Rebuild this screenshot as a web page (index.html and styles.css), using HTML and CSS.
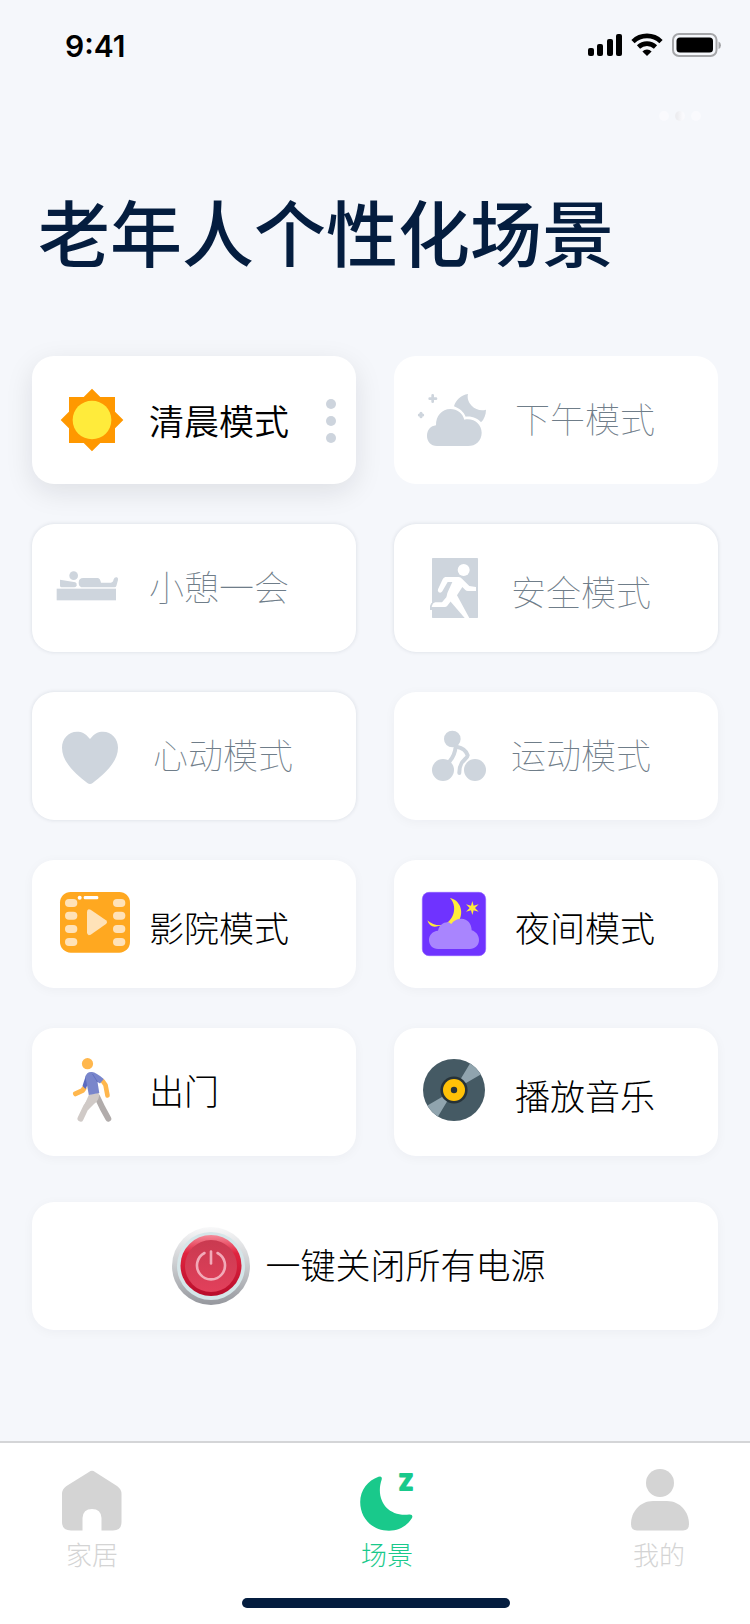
FILE: index.html
```html
<!DOCTYPE html>
<html lang="zh-CN">
<head>
<meta charset="utf-8">
<meta name="viewport" content="width=device-width, initial-scale=1">
<title>老年人个性化场景</title>
<link rel="stylesheet" href="styles.css">
</head>
<body>
<div class="screen">
  <header class="status">
    <time class="clock">9:41</time>
    <svg class="status-icons" width="136" height="26" viewBox="0 0 136 26" aria-hidden="true">
      <rect x="1" y="15" width="6" height="8" rx="2"/>
      <rect x="10" y="11" width="6" height="12" rx="2"/>
      <rect x="20" y="6" width="6" height="17" rx="2"/>
      <rect x="29" y="1" width="6" height="22" rx="2"/>
      <g fill="none" stroke="#000" stroke-width="4.6">
        <path d="M46 8.600a20 20 0 0 1 28 0"/>
        <path d="M51.500 14a12.300 12.300 0 0 1 17 0"/>
      </g>
      <path d="M60 23l-4.600-4.600a6.600 6.600 0 0 1 9.200 0z"/>
      <rect x="86" y="1" width="43.500" height="22" rx="6" fill="none" stroke="#a5a6a9" stroke-width="2"/>
      <rect x="89.500" y="4.500" width="36.500" height="15" rx="3.500"/>
      <path d="M131.500 8.500q2.500 1 2.500 3.700t-2.500 3.700z" fill="#a5a6a9"/>
    </svg>
  </header>

  <button class="page-more" type="button" aria-label="更多">
    <span class="dot"></span><span class="dot dot-mid"></span><span class="dot"></span>
  </button>

  <h1 class="title">老年人个性化场景</h1>

  <main class="scenes">
    <div class="card raised">
      <button class="scene" type="button">
        <svg class="icon" viewBox="102 120 240 240" aria-hidden="true">
          <path fill="#ff9800" d="M147 171H285V309H147zM216 146L310 240L216 334L122 240z"/>
          <circle cx="216" cy="240" r="58" fill="#ffeb3b"/>
        </svg>
        <span class="label strong">清晨模式</span>
      </button>
      <button class="card-more" type="button" aria-label="清晨模式选项">
        <span class="dot"></span><span class="dot"></span><span class="dot"></span>
      </button>
    </div>

    <div class="card flat">
      <button class="scene off wide" type="button">
        <svg class="icon" viewBox="108 120 240 240" aria-hidden="true">
          <path d="M171 318C152 318 141 304 141 288C141 270 152 258 168 256C167 228 186 207 211 207C232 207 248 220 253 239C282 233 305 253 305 278C305 302 287 318 264 318z"/>
          <path d="M264 162C243 165 227 181 222 199C240 206 251 216 257 230C278 228 294 236 303 247C312 238 318 224 318 209C302 214 286 208 275 197C265 187 261 173 264 162z"/>
          <path d="M158 166V185M149 176H168" fill="none" stroke="#ced5dd" stroke-width="8" stroke-linecap="round"/>
          <path d="M123 220V230M118 225H128" fill="none" stroke="#ced5dd" stroke-width="9" stroke-linecap="round"/>
        </svg>
        <span class="label">下午模式</span>
      </button>
    </div>

    <div class="card edged">
      <button class="scene off" type="button">
        <svg class="icon" viewBox="102 114 240 240" aria-hidden="true">
          <rect x="110" y="236" width="178" height="35"/>
          <path d="M120 209L166 217Q171 219 170 226Q169 232 163 232H124Q120 231 120 227z"/>
          <circle cx="161" cy="197" r="13"/>
          <path d="M190 204H234Q240 205 243 218H273Q279 218 281 208Q284 200 291 202Q295 204 294 210L289 228Q288 232 283 232H190Q176 232 176 218Q176 204 190 204z"/>
        </svg>
        <span class="label">小憩一会</span>
      </button>
    </div>

    <div class="card edged">
      <button class="scene off low" type="button">
        <svg class="icon" viewBox="108 114 240 240" aria-hidden="true">
          <rect x="156" y="144" width="138" height="180" rx="2"/>
          <path d="M150 300V288Q152 278 160 276V300z"/>
          <g fill="#fff">
            <circle cx="251" cy="180" r="18"/>
            <path d="M196 201H236Q242 202 246 206L268 228L288 231V243H264Q259 243 256 240L247 231L231 256L268 324H254L205 267Q198 257 203 247L217 216H203L187 244Q183 250 176 247Q172 243 174 238L188 208Q191 202 196 201z"/>
            <path d="M201 254L213 273L202 287Q199 291 194 291H155Q158 278 166 277H186L199 262z"/>
          </g>
        </svg>
        <span class="label">安全模式</span>
      </button>
    </div>

    <div class="card edged">
      <button class="scene off wide" type="button">
        <svg class="icon" viewBox="102 108 240 240" aria-hidden="true">
          <path d="M210 177C197 160 185 155 171 155C145 155 126 176 126 203C126 246 168 283 202 309Q210 315 218 309C252 283 294 246 294 203C294 176 275 155 249 155C235 155 223 160 210 177z"/>
        </svg>
        <span class="label">心动模式</span>
      </button>
    </div>

    <div class="card">
      <button class="scene off" type="button">
        <svg class="icon" viewBox="108 108 240 240" aria-hidden="true">
          <circle cx="217" cy="177" r="25"/>
          <circle cx="189" cy="270" r="33"/>
          <circle cx="285" cy="270" r="33"/>
          <g fill="none" stroke="#ced5dd" stroke-width="12" stroke-linecap="round">
            <path d="M227 200Q225 225 209 244"/>
            <path d="M230 200C250 204 260 215 263 226C262 238 237 240 238 279"/>
          </g>
        </svg>
        <span class="label">运动模式</span>
      </button>
    </div>

    <div class="card">
      <button class="scene low" type="button">
        <svg class="icon" viewBox="102 102 240 240" aria-hidden="true">
          <rect x="120" y="126" width="210" height="182" rx="32" fill="#ffa820"/>
          <g fill="#ffe2b8">
            <rect x="135" y="147" width="37" height="24" rx="12"/>
            <rect x="135" y="185" width="37" height="24" rx="12"/>
            <rect x="135" y="225" width="37" height="24" rx="12"/>
            <rect x="135" y="264" width="37" height="24" rx="12"/>
            <rect x="279" y="147" width="37" height="24" rx="12"/>
            <rect x="279" y="185" width="37" height="24" rx="12"/>
            <rect x="279" y="225" width="37" height="24" rx="12"/>
            <rect x="279" y="264" width="37" height="24" rx="12"/>
            <path d="M201 186Q201 174 212 179L258 211Q264 217 258 222L212 254Q201 259 201 247z"/>
          </g>
          <circle cx="179" cy="143" r="6" fill="#fff"/>
          <rect x="191" y="138" width="44" height="10" rx="4" fill="#fff"/>
        </svg>
        <span class="label">影院模式</span>
      </button>
    </div>

    <div class="card">
      <button class="scene wide low" type="button">
        <svg class="icon" viewBox="108 102 240 240" aria-hidden="true">
          <rect x="127" y="127" width="190" height="190" rx="20" fill="#6f33ff" stroke="#8d5cff" stroke-width="2"/>
          <path fill="#ffeb3b" d="M210 144C240 150 252 185 238 210L215 228H175Q150 236 142 211Q158 226 180 226C215 224 238 175 210 144z"/>
          <path fill="#ffeb3b" d="M277 153L281 167L296 163L285 174L296 185L281 181L277 195L273 181L258 185L269 174L258 163L273 167z"/>
          <path fill="#a985fe" d="M174 297C158 297 147 285 147 270C147 255 158 243 174 242C178 224 192 215 206 217L214 222C220 212 232 206 245 206C262 206 275 221 275 241C288 245 297 256 297 270C297 286 284 297 270 297z"/>
        </svg>
        <span class="label">夜间模式</span>
      </button>
    </div>

    <div class="card">
      <button class="scene" type="button">
        <svg class="icon" viewBox="0 0 80 80" aria-hidden="true">
          <g fill="none" stroke-linecap="round" stroke-linejoin="round">
            <path d="M30 36.500L28.500 38.500L21.500 41.800" stroke="#ffb74d" stroke-width="5"/>
            <path d="M49 29.500L51.500 33L53.500 43.500" stroke="#ffb74d" stroke-width="4.600"/>
            <path d="M43 44.500L48.500 56L54.300 66.600" stroke="#b1acab" stroke-width="6"/>
            <path d="M39 45L32 55L26.500 66.600" stroke="#d0cac7" stroke-width="6"/>
          </g>
          <path d="M35 42.500L45 41.300Q46 48 40 52L34 58L30 54z" fill="#d0cac7"/>
          <circle cx="33.500" cy="11.700" r="5.600" fill="#ffb74d"/>
          <path d="M32 23L28.500 34L31.500 37L34 32z" fill="#5c6bc0"/>
          <path d="M31.500 25Q32.500 19.500 38 20Q42 20.300 49.800 27L46 31.500L43.500 30L45.300 41L34.800 43z" fill="#7986cb"/>
          <path d="M38.500 22L43.500 30" fill="none" stroke="#5c6bc0" stroke-width=".8"/>
        </svg>
        <span class="label">出门</span>
      </button>
    </div>

    <div class="card">
      <button class="scene wide low" type="button">
        <svg class="icon" viewBox="0 0 80 80" aria-hidden="true">
          <circle cx="38" cy="38" r="31" fill="#455a64"/>
          <path d="M38 38L54 11.500A31 31 0 0 1 64.700 22.500zM38 38L22 64.500A31 31 0 0 1 11.400 53.500z" fill="#90a4ae"/>
          <circle cx="38" cy="38" r="13.600" fill="#263238"/>
          <circle cx="38" cy="38" r="11" fill="#ffc107"/>
          <circle cx="38" cy="38" r="3.200" fill="#263238"/>
        </svg>
        <span class="label">播放音乐</span>
      </button>
    </div>

    <div class="card power">
      <button class="power-button" type="button">
        <svg class="power-icon" viewBox="0 0 78 78" aria-hidden="true">
          <defs>
            <linearGradient id="rim" x1="0" y1="0" x2="0" y2="1">
              <stop offset="0" stop-color="#f8f8f9"/>
              <stop offset=".5" stop-color="#c9cbce"/>
              <stop offset="1" stop-color="#95979d"/>
            </linearGradient>
            <linearGradient id="bevel" x1="0" y1="0" x2="0" y2="1">
              <stop offset="0" stop-color="#f58a99"/>
              <stop offset=".3" stop-color="#e0243f"/>
              <stop offset="1" stop-color="#b80d2b"/>
            </linearGradient>
            <linearGradient id="face" x1="0" y1="0" x2="0" y2="1">
              <stop offset="0" stop-color="#c93a50"/>
              <stop offset="1" stop-color="#e2405b"/>
            </linearGradient>
          </defs>
          <circle cx="39" cy="39" r="39" fill="url(#rim)"/>
          <circle cx="39" cy="39" r="34" fill="#d5e6e9"/>
          <circle cx="39" cy="38.500" r="30.500" fill="url(#bevel)"/>
          <circle cx="39" cy="39" r="26" fill="url(#face)"/>
          <g fill="none" stroke="#f2aab8" stroke-width="2.600" stroke-linecap="round">
            <path d="M39 24.500V36.500"/>
            <path d="M32.500 26A14 14 0 1 0 45.500 26"/>
          </g>
        </svg>
        <span class="label">一键关闭所有电源</span>
      </button>
    </div>
  </main>

  <nav class="tabs" aria-label="主导航">
    <a class="tab" href="#home">
      <svg class="tab-icon" viewBox="0 0 62 64" aria-hidden="true">
        <path d="M28 4Q31 1.500 34 4L56 18Q60.500 21 60.500 26V54Q60.500 62.500 52 62.500H40.500V50Q40 41 31 41T21.500 50V62.500H10Q1 62.500 1 54V26Q1 21 5.500 18z"/>
      </svg>
      <span>家居</span>
    </a>
    <a class="tab current" href="#scenes" aria-current="page">
      <svg class="tab-icon" viewBox="0 0 62 64" aria-hidden="true">
        <path d="M22.500 8.700Q26.500 7.500 25.700 11.500C19 31 31 49 53 46.500Q57.500 46 56 50C51 58 43 62.700 33 62.700C16 62.700 4.200 50 4.200 34C4.200 22 12 12.500 22.500 8.700z"/>
        <text class="snooze" x="43" y="22">Z</text>
      </svg>
      <span>场景</span>
    </a>
    <a class="tab" href="#me">
      <svg class="tab-icon" viewBox="0 0 62 64" aria-hidden="true">
        <circle cx="32" cy="15" r="14"/>
        <path d="M25 33H39C52 33 61 44 61 56Q61 62.500 55 62.500H9Q3 62.500 3 56C3 44 12 33 25 33z"/>
      </svg>
      <span>我的</span>
    </a>
    <div class="home-bar"></div>
  </nav>
</div>
</body>
</html>
```

FILE: styles.css
```css
* {
  box-sizing: border-box;
}

body {
  margin: 0;
  background: #f5f7fb;
  color: #000;
  font-family: "Inter", "Noto Sans CJK SC", sans-serif;
}

button {
  margin: 0;
  padding: 0;
  border: 0;
  background: none;
  color: inherit;
  font: inherit;
  text-align: left;
  cursor: pointer;
}

.screen {
  display: flex;
  flex-direction: column;
  min-height: 100vh;
}

.status {
  display: flex;
  justify-content: space-between;
  align-items: center;
  padding: 24px 27px 0 65px;
}

.clock {
  font-size: 30px;
  font-weight: 600;
  line-height: 44px;
}

.page-more {
  display: flex;
  gap: 6px;
  align-self: flex-end;
  margin: 43px 49px 0 0;
}

.page-more .dot {
  background: #fafafd;
}

.page-more .dot-mid {
  background: linear-gradient(90deg, #ededf0 20%, #fafafd 80%);
}

.dot {
  display: block;
  width: 10px;
  height: 10px;
  border-radius: 50%;
  background: #cdd4dd;
}

.title {
  margin: 55px 32px 0 38px;
  color: #041d3f;
  font-family: "Noto Sans CJK SC", sans-serif;
  font-size: 72px;
  font-weight: 500;
  line-height: 108px;
}

.scenes {
  display: grid;
  grid-template-columns: 1fr 1fr;
  gap: 40px 38px;
  padding: 72px 32px 0;
}

.card {
  display: flex;
  min-height: 128px;
  border-radius: 22px;
  background: #fff;
  box-shadow: 0 2px 12px rgba(20, 30, 60, 0.04);
}

.card.raised {
  box-shadow: 0 8px 28px rgba(20, 20, 30, 0.1);
}

.card.flat {
  box-shadow: none;
}

.card.edged {
  box-shadow: 0 0 4px rgba(20, 30, 60, 0.12);
}

.scene {
  display: flex;
  flex: 1;
  align-items: center;
  gap: 15px;
  padding-left: 22px;
}

.scene.wide {
  gap: 19px;
}

.icon {
  flex: none;
  width: 80px;
  height: 80px;
  fill: #ced5dd;
}

.label {
  padding-bottom: 4px;
  font-family: "Noto Sans CJK SC", sans-serif;
  font-size: 35px;
  font-weight: 300;
  line-height: 52px;
  white-space: nowrap;
}

.label.strong {
  padding-bottom: 0;
  font-weight: 350;
}

.low .label {
  padding: 6px 0 0;
}

.off .label {
  color: #6f7d89;
  font-weight: 100;
}

.card-more {
  display: flex;
  flex-direction: column;
  justify-content: center;
  gap: 7px;
  padding: 2px 20px 0 19px;
}

.power {
  grid-column: 1 / -1;
  margin-top: 6px;
}

.power-button {
  display: flex;
  flex: 1;
  justify-content: center;
  align-items: center;
  gap: 15px;
  padding-right: 32px;
}

.power-icon {
  width: 78px;
  height: 78px;
}

.tabs {
  display: grid;
  grid-template-columns: 182fr 408fr 136fr;
  margin-top: auto;
  padding: 25px 23px 16px 1px;
  border-top: 2px solid #d4d5d7;
  background: #fff;
}

.tab {
  display: flex;
  flex-direction: column;
  align-items: center;
  gap: 4px;
  color: #d4d4d4;
  font-family: "Noto Sans CJK SC", sans-serif;
  font-size: 26px;
  font-weight: 300;
  line-height: 36px;
  text-decoration: none;
}

.tab.current {
  color: #19c98b;
}

.tab-icon {
  width: 62px;
  height: 64px;
  fill: currentColor;
}

.snooze {
  font-family: "Inter", sans-serif;
  font-size: 21px;
  font-weight: 700;
  stroke: currentColor;
  stroke-width: 2px;
  stroke-linejoin: round;
}

.home-bar {
  grid-column: 1 / -1;
  justify-self: center;
  width: 268px;
  height: 10px;
  margin: 26px 0 0 24px;
  border-radius: 5px;
  background: #041d3f;
}
```
